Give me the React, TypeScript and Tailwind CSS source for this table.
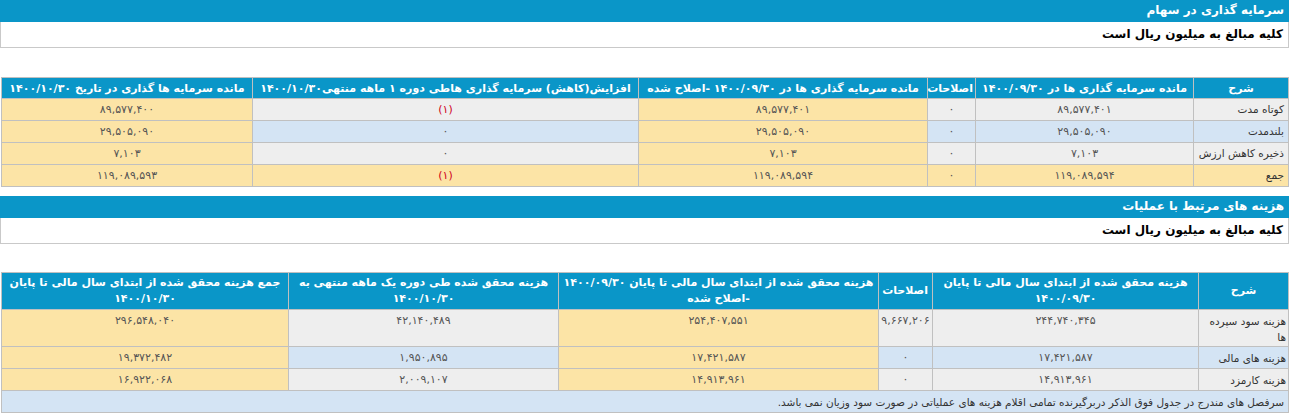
import React from "react";

const F = { fontFamily: '"DejaVu Sans", Tahoma, sans-serif' };

type Cell = { t: string; red?: boolean };

function Section({ title }: { title: string }) {
  return (
    <div>
      <div className="h-[22px] bg-[#0a96c8] px-[5px] text-[12px] font-bold leading-[21px] text-white">{title}</div>
      <div className="h-[26px] border border-t-0 border-[#c9c9c9] px-[5px] text-[12px] font-bold leading-[25px] text-black">
        کلیه مبالغ به میلیون ریال است
      </div>
    </div>
  );
}

const Y = "bg-[#fce4a6]";
const G = "bg-[#eeeeee]";
const B = "bg-[#d4e4f4]";

function Table1() {
  const widths = [95, 218, 48, 289, 386, 251];
  const heads = [
    "شرح",
    "مانده سرمایه گذاری ها در ۱۴۰۰/۰۹/۳۰",
    "اصلاحات",
    "مانده سرمایه گذاری ها در ۱۴۰۰/۰۹/۳۰ -اصلاح شده",
    "افزایش(کاهش) سرمایه گذاری هاطی دوره ۱ ماهه منتهی۱۴۰۰/۱۰/۳۰",
    "مانده سرمایه ها گذاری در تاریخ ۱۴۰۰/۱۰/۳۰",
  ];
  const rows: { bg: string; cells: Cell[] }[] = [
    { bg: G, cells: [{ t: "کوتاه مدت" }, { t: "۸۹,۵۷۷,۴۰۱" }, { t: "۰" }, { t: "۸۹,۵۷۷,۴۰۱" }, { t: "(۱)", red: true }, { t: "۸۹,۵۷۷,۴۰۰" }] },
    { bg: B, cells: [{ t: "بلندمدت" }, { t: "۲۹,۵۰۵,۰۹۰" }, { t: "۰" }, { t: "۲۹,۵۰۵,۰۹۰" }, { t: "۰" }, { t: "۲۹,۵۰۵,۰۹۰" }] },
    { bg: G, cells: [{ t: "ذخیره کاهش ارزش" }, { t: "۷,۱۰۳" }, { t: "۰" }, { t: "۷,۱۰۳" }, { t: "۰" }, { t: "۷,۱۰۳" }] },
    { bg: Y, cells: [{ t: "جمع" }, { t: "۱۱۹,۰۸۹,۵۹۴" }, { t: "۰" }, { t: "۱۱۹,۰۸۹,۵۹۴" }, { t: "(۱)", red: true }, { t: "۱۱۹,۰۸۹,۵۹۳" }] },
  ];
  return (
    <table className="ml-[1px] w-[1287px] table-fixed border-collapse border border-[#c0c0c0]">
      <colgroup>
        {widths.map((w, i) => (
          <col key={i} style={{ width: w }} />
        ))}
      </colgroup>
      <thead>
        <tr className="h-[21px]">
          {heads.map((h, i) => (
            <th key={i} className="overflow-hidden whitespace-nowrap border border-[#c0c0c0] bg-[#0a96c8] px-[2px] text-center text-[11px] font-bold leading-[15px] text-white">
              {h}
            </th>
          ))}
        </tr>
      </thead>
      <tbody>
        {rows.map((r, ri) => (
          <tr key={ri} className="h-[22px]">
            {r.cells.map((c, ci) => {
              const yellowCol = ci === 3 || ci === 5;
              const bg = yellowCol ? Y : r.bg;
              return (
                <td
                  key={ci}
                  className={`whitespace-nowrap border border-[#c0c0c0] ${bg} px-[4px] leading-[15px] ${ci === 0 ? "text-right text-[10.5px] text-[#333333]" : "text-center text-[11px]"} ${c.red ? "text-[#d0021b]" : ci === 0 ? "" : "text-[#555555]"}`}
                >
                  {c.t}
                </td>
              );
            })}
          </tr>
        ))}
      </tbody>
    </table>
  );
}

function Table2() {
  const widths = [90, 266, 54, 320, 270, 287];
  const heads = [
    "شرح",
    "هزینه محقق شده از ابتدای سال مالی تا پایان ۱۴۰۰/۰۹/۳۰",
    "اصلاحات",
    "هزینه محقق شده از ابتدای سال مالی تا پایان ۱۴۰۰/۰۹/۳۰ -اصلاح شده",
    "هزینه محقق شده طی دوره یک ماهه منتهی به ۱۴۰۰/۱۰/۳۰",
    "جمع هزینه محقق شده از ابتدای سال مالی تا پایان ۱۴۰۰/۱۰/۳۰",
  ];
  const rows: { bg: string; h: string; cells: string[] }[] = [
    { bg: G, h: "h-[37px]", cells: ["هزینه سود سپرده ها", "۲۴۴,۷۴۰,۳۴۵", "۹,۶۶۷,۲۰۶", "۲۵۴,۴۰۷,۵۵۱", "۴۲,۱۴۰,۴۸۹", "۲۹۶,۵۴۸,۰۴۰"] },
    { bg: B, h: "h-[22px]", cells: ["هزینه های مالی", "۱۷,۴۲۱,۵۸۷", "۰", "۱۷,۴۲۱,۵۸۷", "۱,۹۵۰,۸۹۵", "۱۹,۳۷۲,۴۸۲"] },
    { bg: G, h: "h-[22px]", cells: ["هزینه کارمزد", "۱۴,۹۱۳,۹۶۱", "۰", "۱۴,۹۱۳,۹۶۱", "۲,۰۰۹,۱۰۷", "۱۶,۹۲۲,۰۶۸"] },
  ];
  return (
    <table className="ml-[1px] w-[1287px] table-fixed border-collapse border border-[#c0c0c0]">
      <colgroup>
        {widths.map((w, i) => (
          <col key={i} style={{ width: w }} />
        ))}
      </colgroup>
      <thead>
        <tr className="h-[37px]">
          {heads.map((h, i) => (
            <th key={i} className="border border-[#c0c0c0] bg-[#0a96c8] px-[4px] text-center text-[11px] font-bold leading-[16px] text-white">
              {h}
            </th>
          ))}
        </tr>
      </thead>
      <tbody>
        {rows.map((r, ri) => (
          <tr key={ri} className={r.h}>
            {r.cells.map((c, ci) => {
              const yellowCol = ci === 3 || ci === 5;
              const bg = yellowCol ? Y : r.bg;
              return (
                <td
                  key={ci}
                  className={`border border-[#c0c0c0] ${bg} px-[2px] pt-[3px] align-top leading-[16px] ${ci === 0 ? "text-right text-[10.5px] text-[#333333]" : "text-center text-[11px] text-[#555555]"}`}
                >
                  {c}
                </td>
              );
            })}
          </tr>
        ))}
        <tr className="h-[22px]">
          <td colSpan={6} className={`border border-[#c0c0c0] ${B} px-[4px] text-right text-[10.5px] leading-[16px] text-[#333333]`}>
            سرفصل های مندرج در جدول فوق الذکر دربرگیرنده تمامی اقلام هزینه های عملیاتی در صورت سود وزیان نمی باشد.
          </td>
        </tr>
      </tbody>
    </table>
  );
}

export default function App() {
  return (
    <div dir="rtl" style={F} className="h-[413px] w-[1289px] overflow-hidden bg-white">
      <Section title="سرمایه گذاری در سهام" />
      <div className="h-[29px]" />
      <Table1 />
      <div className="h-[9px]" />
      <Section title="هزینه های مرتبط با عملیات" />
      <div className="h-[28px]" />
      <Table2 />
    </div>
  );
}
